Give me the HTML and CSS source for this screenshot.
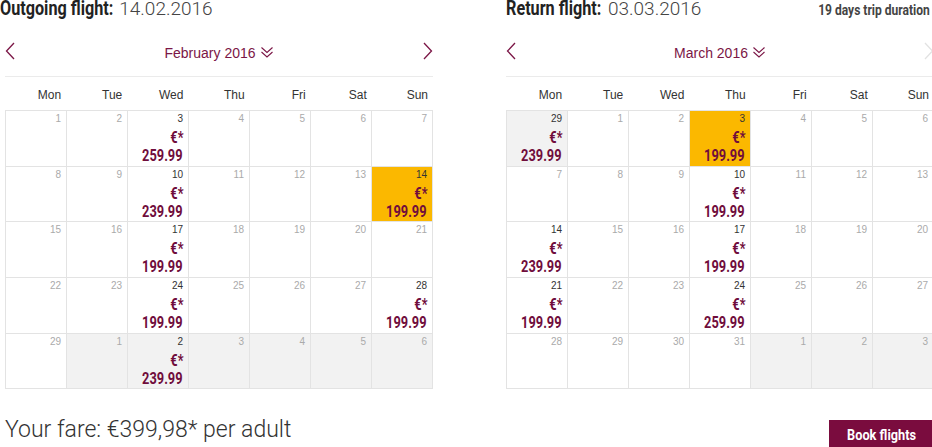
FILE: index.html
```html
<!DOCTYPE html>
<html lang="en">
<head>
<meta charset="utf-8">
<title>Select your flights</title>
<link rel="stylesheet" href="styles.css">
</head>
<body>
<div class="page">
  <div class="legs">
    <section class="leg leg-out">
      <div class="leg-head">
        <h2 class="leg-title"><b>Outgoing flight:</b> <span class="leg-date">14.02.2016</span></h2>
      </div>
      <div class="nav">
        <button class="arrow" aria-label="Previous month"><svg width="10" height="18" viewBox="0 0 10 18"><polyline points="9,1 1.5,9 9,17" fill="none" stroke="#7b1646" stroke-width="1.3"/></svg></button>
        <div class="month">February 2016 <svg class="chev" width="14" height="13" viewBox="0 0 14 13"><polyline points="1.5,1.5 7,6.5 12.5,1.5" fill="none" stroke="#7b1646" stroke-width="1.1"/><polyline points="1.5,6 7,11 12.5,6" fill="none" stroke="#7b1646" stroke-width="1.1"/></svg></div>
        <button class="arrow" aria-label="Next month"><svg width="10" height="18" viewBox="0 0 10 18"><polyline points="1,1 8.5,9 1,17" fill="none" stroke="#7b1646" stroke-width="1.3"/></svg></button>
      </div>
      <div class="weekdays"><span>Mon</span><span>Tue</span><span>Wed</span><span>Thu</span><span>Fri</span><span>Sat</span><span>Sun</span></div>
      <div class="grid">
        <div class="day"><span class="num">1</span></div>
        <div class="day"><span class="num">2</span></div>
        <div class="day priced"><span class="num">3</span><span class="cur">€*</span><span class="amt">259.99</span></div>
        <div class="day"><span class="num">4</span></div>
        <div class="day"><span class="num">5</span></div>
        <div class="day"><span class="num">6</span></div>
        <div class="day"><span class="num">7</span></div>

        <div class="day"><span class="num">8</span></div>
        <div class="day"><span class="num">9</span></div>
        <div class="day priced"><span class="num">10</span><span class="cur">€*</span><span class="amt">239.99</span></div>
        <div class="day"><span class="num">11</span></div>
        <div class="day"><span class="num">12</span></div>
        <div class="day"><span class="num">13</span></div>
        <div class="day priced selected"><span class="num">14</span><span class="cur">€*</span><span class="amt">199.99</span></div>

        <div class="day"><span class="num">15</span></div>
        <div class="day"><span class="num">16</span></div>
        <div class="day priced"><span class="num">17</span><span class="cur">€*</span><span class="amt">199.99</span></div>
        <div class="day"><span class="num">18</span></div>
        <div class="day"><span class="num">19</span></div>
        <div class="day"><span class="num">20</span></div>
        <div class="day"><span class="num">21</span></div>

        <div class="day"><span class="num">22</span></div>
        <div class="day"><span class="num">23</span></div>
        <div class="day priced"><span class="num">24</span><span class="cur">€*</span><span class="amt">199.99</span></div>
        <div class="day"><span class="num">25</span></div>
        <div class="day"><span class="num">26</span></div>
        <div class="day"><span class="num">27</span></div>
        <div class="day priced"><span class="num">28</span><span class="cur">€*</span><span class="amt">199.99</span></div>

        <div class="day"><span class="num">29</span></div>
        <div class="day other"><span class="num">1</span></div>
        <div class="day other priced"><span class="num">2</span><span class="cur">€*</span><span class="amt">239.99</span></div>
        <div class="day other"><span class="num">3</span></div>
        <div class="day other"><span class="num">4</span></div>
        <div class="day other"><span class="num">5</span></div>
        <div class="day other"><span class="num">6</span></div>
      </div>
    </section>

    <section class="leg leg-return">
      <div class="leg-head">
        <h2 class="leg-title"><b>Return flight:</b> <span class="leg-date">03.03.2016</span></h2>
        <span class="duration">19 days trip duration</span>
      </div>
      <div class="nav">
        <button class="arrow" aria-label="Previous month"><svg width="10" height="18" viewBox="0 0 10 18"><polyline points="9,1 1.5,9 9,17" fill="none" stroke="#7b1646" stroke-width="1.3"/></svg></button>
        <div class="month">March 2016 <svg class="chev" width="14" height="13" viewBox="0 0 14 13"><polyline points="1.5,1.5 7,6.5 12.5,1.5" fill="none" stroke="#7b1646" stroke-width="1.1"/><polyline points="1.5,6 7,11 12.5,6" fill="none" stroke="#7b1646" stroke-width="1.1"/></svg></div>
        <button class="arrow disabled" aria-label="Next month"><svg width="10" height="18" viewBox="0 0 10 18"><polyline points="1,1 8.5,9 1,17" fill="none" stroke="#e2e2e2" stroke-width="1.3"/></svg></button>
      </div>
      <div class="weekdays"><span>Mon</span><span>Tue</span><span>Wed</span><span>Thu</span><span>Fri</span><span>Sat</span><span>Sun</span></div>
      <div class="grid">
        <div class="day other priced"><span class="num">29</span><span class="cur">€*</span><span class="amt">239.99</span></div>
        <div class="day"><span class="num">1</span></div>
        <div class="day"><span class="num">2</span></div>
        <div class="day priced selected"><span class="num">3</span><span class="cur">€*</span><span class="amt">199.99</span></div>
        <div class="day"><span class="num">4</span></div>
        <div class="day"><span class="num">5</span></div>
        <div class="day"><span class="num">6</span></div>

        <div class="day"><span class="num">7</span></div>
        <div class="day"><span class="num">8</span></div>
        <div class="day"><span class="num">9</span></div>
        <div class="day priced"><span class="num">10</span><span class="cur">€*</span><span class="amt">199.99</span></div>
        <div class="day"><span class="num">11</span></div>
        <div class="day"><span class="num">12</span></div>
        <div class="day"><span class="num">13</span></div>

        <div class="day priced"><span class="num">14</span><span class="cur">€*</span><span class="amt">239.99</span></div>
        <div class="day"><span class="num">15</span></div>
        <div class="day"><span class="num">16</span></div>
        <div class="day priced"><span class="num">17</span><span class="cur">€*</span><span class="amt">199.99</span></div>
        <div class="day"><span class="num">18</span></div>
        <div class="day"><span class="num">19</span></div>
        <div class="day"><span class="num">20</span></div>

        <div class="day priced"><span class="num">21</span><span class="cur">€*</span><span class="amt">199.99</span></div>
        <div class="day"><span class="num">22</span></div>
        <div class="day"><span class="num">23</span></div>
        <div class="day priced"><span class="num">24</span><span class="cur">€*</span><span class="amt">259.99</span></div>
        <div class="day"><span class="num">25</span></div>
        <div class="day"><span class="num">26</span></div>
        <div class="day"><span class="num">27</span></div>

        <div class="day"><span class="num">28</span></div>
        <div class="day"><span class="num">29</span></div>
        <div class="day"><span class="num">30</span></div>
        <div class="day"><span class="num">31</span></div>
        <div class="day other"><span class="num">1</span></div>
        <div class="day other"><span class="num">2</span></div>
        <div class="day other"><span class="num">3</span></div>
      </div>
    </section>
  </div>

  <div class="summary">
    <p class="fare">Your fare: €399,98* per adult</p>
    <button class="book"><span class="book-label">Book flights</span></button>
  </div>
</div>
</body>
</html>
```

FILE: styles.css
```css
html, body {
  margin: 0;
  padding: 0;
  overflow: hidden;
  background: #fff;
}

body {
  font-family: "Liberation Sans", Arial, sans-serif;
  color: #333;
}

.page {
  width: 934px;
  margin-top: -4px;
}

.legs {
  display: flex;
  gap: 73px;
  padding-left: 5px;
}

.leg {
  width: 428px;
  flex: none;
}

/* heading row: "Outgoing flight: date" */
.leg-head {
  display: flex;
  justify-content: space-between;
  align-items: baseline;
  height: 24px;
}

.leg-out .leg-head {
  margin-left: -5px;
}

.leg-title {
  margin: 0;
  font-size: 19px;
  line-height: 24px;
  font-weight: normal;
  white-space: nowrap;
}

/* condensed bold label: Roboto Bold narrowed horizontally */
.leg-title b {
  display: inline-block;
  font-family: "Roboto", "Liberation Sans", sans-serif;
  font-weight: bold;
  font-size: 20px;
  color: #222;
  transform: scaleX(0.81);
  transform-origin: left center;
  margin-right: -26px;
}

.leg-return .leg-title b {
  margin-right: -21px;
}

.leg-date {
  font-family: "Roboto", "Liberation Sans", sans-serif;
  font-weight: 300;
  color: #444;
}

.duration {
  display: inline-block;
  font-family: "Roboto", "Liberation Sans", sans-serif;
  font-weight: bold;
  font-size: 14px;
  color: #444;
  transform: scaleX(0.86);
  transform-origin: right center;
  margin-right: 4px;
}

/* month navigation */
.nav {
  display: flex;
  align-items: center;
  justify-content: space-between;
  box-sizing: border-box;
  height: 57px;
  padding-top: 6px;
  border-bottom: 1px solid #ebebeb;
}

.arrow {
  background: none;
  border: 0;
  padding: 0;
  width: 10px;
  height: 18px;
  cursor: pointer;
}

.arrow svg {
  display: block;
}

.month {
  display: flex;
  align-items: center;
  gap: 4px;
  font-size: 14px;
  color: #7b1646;
  margin-top: 3px;
}

.chev {
  display: block;
  margin-top: -1px;
}

/* weekday labels */
.weekdays {
  display: grid;
  grid-template-columns: repeat(7, 1fr);
  height: 33px;
  padding-top: 3px;
  box-sizing: border-box;
  font-size: 12px;
  line-height: 30px;
  color: #333;
}

.weekdays span {
  text-align: right;
  padding-right: 5px;
}

/* day grid */
.grid {
  display: grid;
  grid-template-columns: repeat(7, 1fr);
  grid-auto-rows: 55.7px;
  border-top: 1px solid #e3e3e3;
  border-left: 1px solid #e3e3e3;
}

.day {
  display: flex;
  flex-direction: column;
  align-items: flex-end;
  box-sizing: border-box;
  padding: 2px 5px 0 0;
  border-right: 1px solid #e3e3e3;
  border-bottom: 1px solid #e3e3e3;
  background: #fff;
}

.day.other {
  background: #f2f2f2;
}

.day.selected {
  background: #fbb800;
}

.num {
  font-size: 10px;
  line-height: 12px;
  color: #aaa;
}

.priced .num {
  color: #333;
}

.cur,
.amt {
  display: inline-block;
  font-family: "Roboto", "Liberation Sans", sans-serif;
  font-weight: bold;
  font-size: 16px;
  line-height: 18px;
  color: #700d3c;
  transform: scaleX(0.8);
  transform-origin: right center;
}

.cur {
  margin-top: 4px;
}

/* fare total and booking */
.summary {
  display: flex;
  justify-content: space-between;
  align-items: flex-start;
  padding-left: 5px;
  margin-top: 31px;
}

.fare {
  margin: -5px 0 0;
  font-family: "Roboto", "Liberation Sans", sans-serif;
  font-weight: 300;
  font-size: 23px;
  line-height: 30px;
  color: #333;
}

.book {
  width: 105px;
  height: 30px;
  border: 0;
  padding: 0;
  background: #7a0c3e;
  color: #fff;
  cursor: pointer;
}

.book-label {
  display: inline-block;
  font-family: "Roboto", "Liberation Sans", sans-serif;
  font-weight: bold;
  font-size: 15px;
  transform: scaleX(0.85);
}
```
